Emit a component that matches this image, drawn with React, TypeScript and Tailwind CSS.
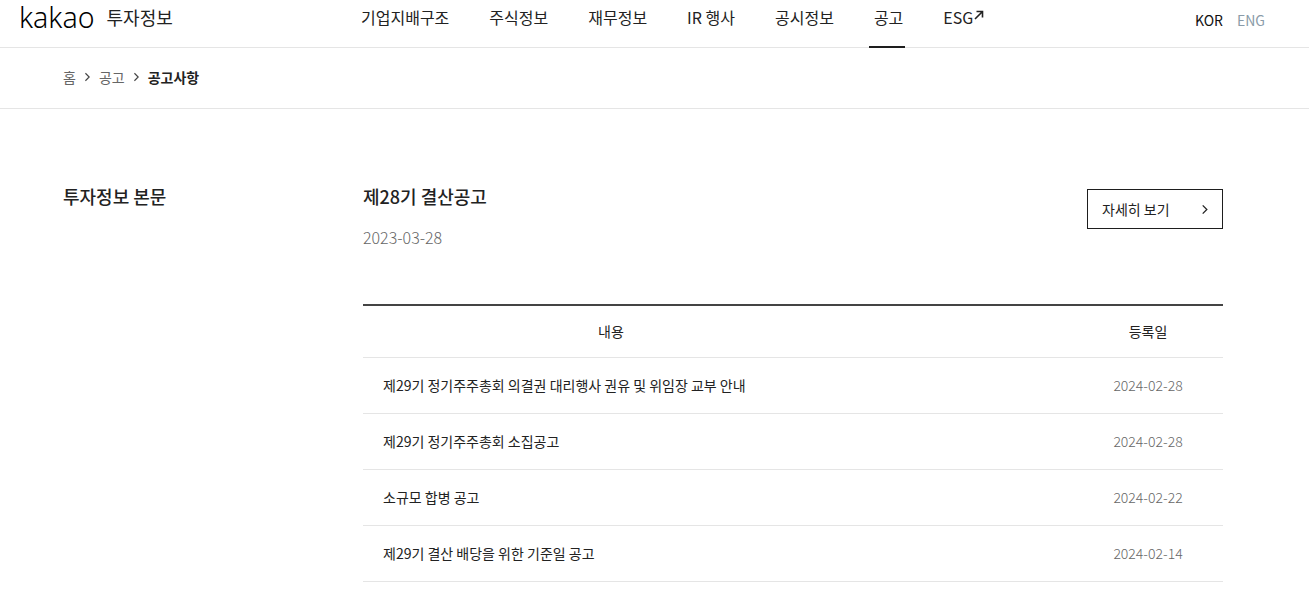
import React from "react";

const font = { fontFamily: '"Noto Sans CJK KR", "Noto Sans", sans-serif' };

const navItems = ["기업지배구조", "주식정보", "재무정보", "IR 행사", "공시정보", "공고"];

const notices = [
  { title: "제29기 정기주주총회 의결권 대리행사 권유 및 위임장 교부 안내", date: "2024-02-28" },
  { title: "제29기 정기주주총회 소집공고", date: "2024-02-28" },
  { title: "소규모 합병 공고", date: "2024-02-22" },
  { title: "제29기 결산 배당을 위한 기준일 공고", date: "2024-02-14" },
];

function Chevron({ className }: { className?: string }) {
  return (
    <svg viewBox="0 0 8 12" className={className} fill="none" stroke="currentColor" strokeWidth="1.4">
      <path d="M1.5 1.5 6 6 1.5 10.5" />
    </svg>
  );
}

function Header() {
  return (
    <header className="flex h-[48px] border-b border-[#e5e5e5]">
      <div className="flex w-[361px] items-start pl-[19px]">
        <span className="text-[28.5px] leading-[34px] font-light text-black" style={{ fontFamily: '"Noto Sans", sans-serif' }}>
          kakao
        </span>
        <span className="ml-[12px] text-[18px] leading-[34px] text-[#222]">투자정보</span>
      </div>
      <nav className="flex gap-[40px]">
        {navItems.map((item) => (
          <a
            key={item}
            className={
              "h-[48px] text-[16px] leading-[34px] text-[#222] " +
              (item === "공고" ? "-mr-[2px] -ml-[5px] border-b-2 border-[#1e1e1e] pr-[2px] pl-[5px]" : "")
            }
          >
            {item}
          </a>
        ))}
        <a className="flex h-[48px] items-start text-[16px] leading-[34px] text-[#222]">
          ESG
          <svg viewBox="0 0 10 10" className="mt-[10px] ml-[1px] h-[10px] w-[10px]" fill="none" stroke="#222" strokeWidth="1.6">
            <path d="M1 9 8.5 1.5M2.5 1.5h6v6" />
          </svg>
        </a>
      </nav>
      <div className="ml-auto flex items-start gap-[14px] pr-[44px] text-[14px] leading-[40px]">
        <span className="text-[#111]">KOR</span>
        <span className="text-[#8a9ba8]">ENG</span>
      </div>
    </header>
  );
}

function Breadcrumb() {
  return (
    <div className="flex h-[61px] items-center border-b border-[#e5e5e5] pb-[2px] pl-[63px] text-[14px] text-[#666]">
      <span>홈</span>
      <Chevron className="mx-[8px] h-[10px] w-[7px] text-[#444]" />
      <span>공고</span>
      <Chevron className="mx-[8px] h-[10px] w-[7px] text-[#444]" />
      <span className="font-bold text-[#222]">공고사항</span>
    </div>
  );
}

function NoticeTable() {
  return (
    <div className="mt-[52px] border-t-2 border-[#444]">
      <div className="flex h-[52px] items-center border-b border-[#e5e5e5] text-[14px] text-[#222]">
        <div className="w-[496px] text-center">내용</div>
        <div className="ml-auto w-[150px] text-center">등록일</div>
      </div>
      {notices.map((n) => (
        <div key={n.title} className="flex h-[56px] items-center border-b border-[#e5e5e5] text-[14px]">
          <div className="flex-1 pl-[20px] text-[#222]">{n.title}</div>
          <div className="w-[150px] text-center font-light text-[#666]">{n.date}</div>
        </div>
      ))}
    </div>
  );
}

export default function App() {
  return (
    <div className="min-h-[603px] bg-white" style={font}>
      <Header />
      <Breadcrumb />
      <main className="flex px-[63px] pt-[73px] pr-[86px]">
        <h2 className="w-[300px] text-[18px] leading-[28px] font-medium text-[#222]">투자정보 본문</h2>
        <section className="flex-1">
          <div className="flex items-start justify-between">
            <div>
              <h3 className="text-[18px] leading-[28px] font-medium text-[#222]">제28기 결산공고</h3>
              <p className="mt-[13px] mb-[1px] text-[16px] leading-[28px] font-light text-[#666]">2023-03-28</p>
            </div>
            <a className="mt-[7px] flex h-[40px] w-[136px] items-center justify-between border border-[#1e1e1e] pr-[13px] pl-[14px] text-[14px] text-[#222]">
              자세히 보기
              <Chevron className="h-[11px] w-[8px] text-[#222]" />
            </a>
          </div>
          <NoticeTable />
        </section>
      </main>
    </div>
  );
}
